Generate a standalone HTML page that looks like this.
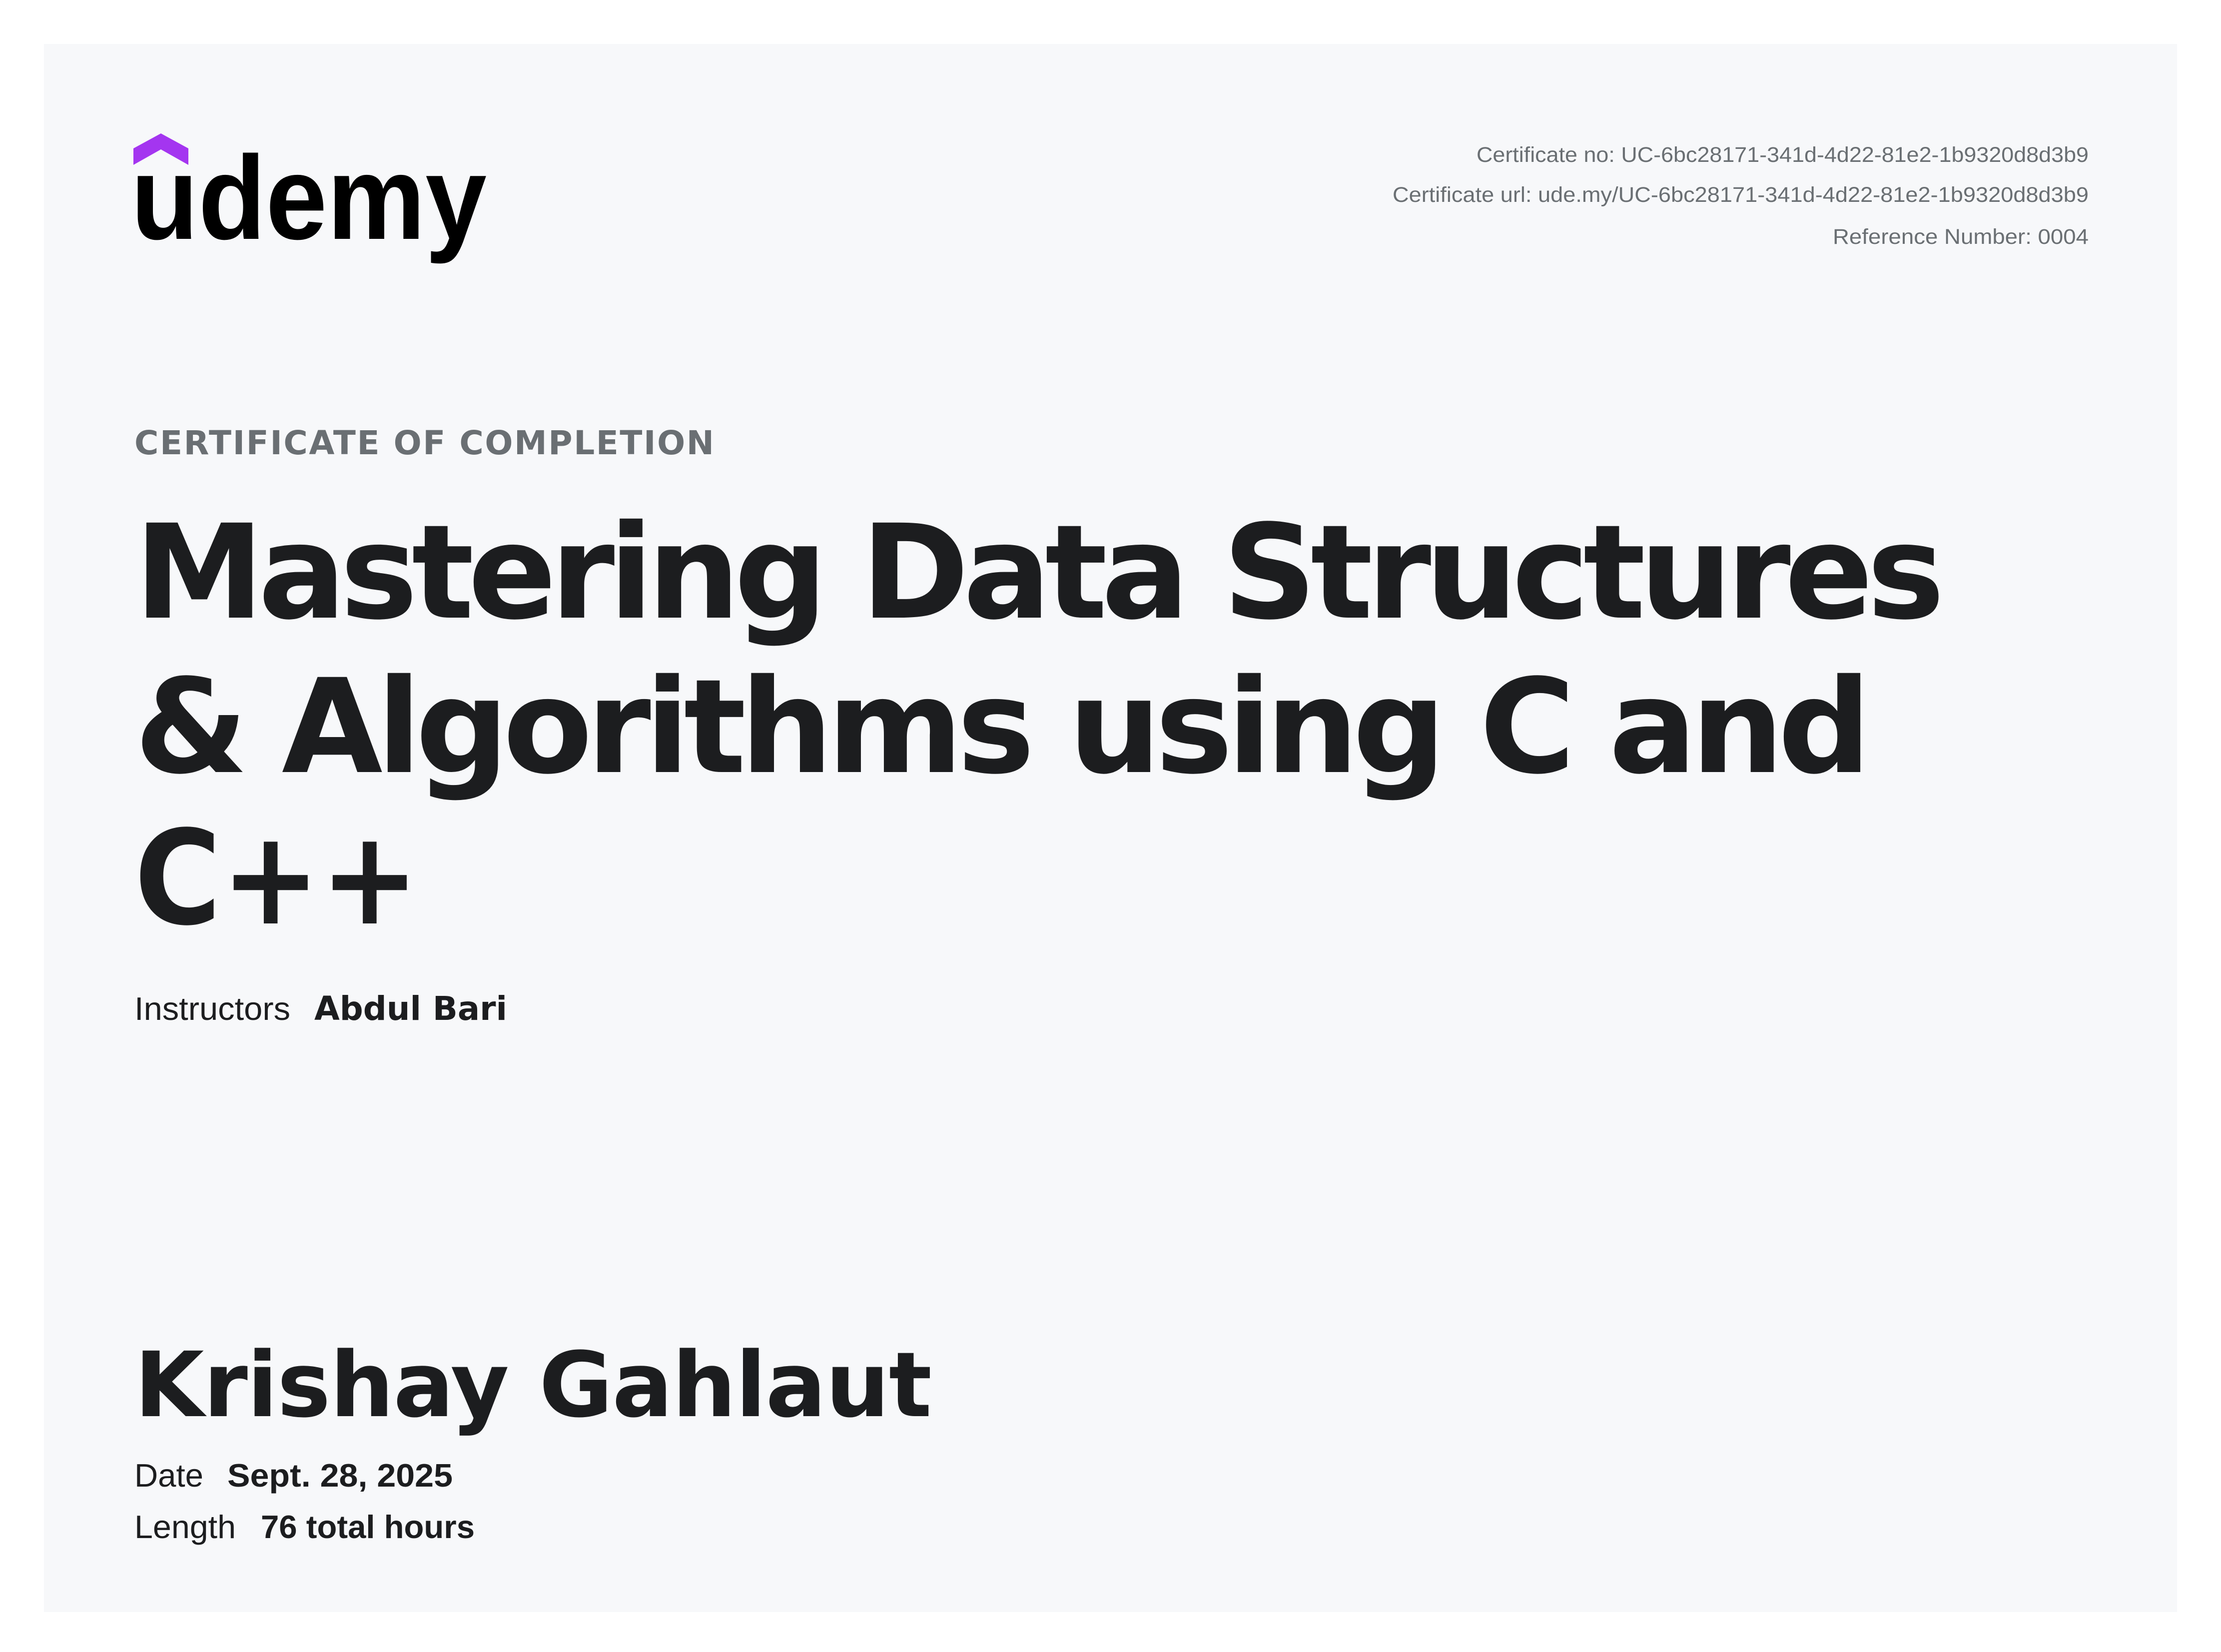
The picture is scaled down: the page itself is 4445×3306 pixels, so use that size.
<!DOCTYPE html>
<html><head><meta charset="utf-8"><style>
html,body{margin:0;padding:0;background:#fff}
svg{display:block}
</style></head><body>
<svg width="4445" height="3306" viewBox="0 0 4445 3306" xmlns="http://www.w3.org/2000/svg">
<rect width="4445" height="3306" fill="#ffffff"/>
<rect x="88" y="88" width="4269" height="3138" fill="#f7f8fa"/>
<polygon points="267,330 267,297 322,267 377,297 377,330 322,299" fill="#a435f0"/>
<text x="262" y="478" font-family="Liberation Sans, sans-serif" font-weight="bold" font-size="238" fill="#000" textLength="712" lengthAdjust="spacingAndGlyphs">udemy</text>
<g font-family="Liberation Sans, sans-serif" font-size="43" fill="#6a6f73" text-anchor="end">
<text x="4180" y="324" textLength="1225" lengthAdjust="spacingAndGlyphs">Certificate no: UC-6bc28171-341d-4d22-81e2-1b9320d8d3b9</text>
<text x="4180" y="404" textLength="1393" lengthAdjust="spacingAndGlyphs">Certificate url: ude.my/UC-6bc28171-341d-4d22-81e2-1b9320d8d3b9</text>
<text x="4180" y="488" textLength="512" lengthAdjust="spacingAndGlyphs">Reference Number: 0004</text>
</g>
<text x="269" y="909" font-family="DejaVu Sans, sans-serif" font-weight="bold" font-size="66" fill="#6a6f73" textLength="1160" lengthAdjust="spacing">CERTIFICATE OF COMPLETION</text>
<g font-family="DejaVu Sans, sans-serif" font-weight="bold" font-size="261" fill="#1c1d1f">
<text x="269" y="1236" textLength="3623" lengthAdjust="spacing">Mastering Data Structures</text>
<text x="269" y="1545" textLength="3476" lengthAdjust="spacing">&amp; Algorithms using C and</text>
<text x="269" y="1848" textLength="570" lengthAdjust="spacingAndGlyphs">C++</text>
</g>
<text x="269" y="2041" font-family="Liberation Sans, sans-serif" font-size="65" fill="#1c1d1f" textLength="312" lengthAdjust="spacingAndGlyphs">Instructors</text>
<text x="629" y="2041" font-family="DejaVu Sans, sans-serif" font-weight="bold" font-size="66" fill="#1c1d1f" textLength="386" lengthAdjust="spacingAndGlyphs">Abdul Bari</text>
<text x="269" y="2834" font-family="DejaVu Sans, sans-serif" font-weight="bold" font-size="180" fill="#1c1d1f" textLength="1596" lengthAdjust="spacing">Krishay Gahlaut</text>
<g font-family="Liberation Sans, sans-serif" font-size="65" fill="#1c1d1f">
<text x="269" y="2975" textLength="138" lengthAdjust="spacingAndGlyphs">Date</text>
<text x="455" y="2975" font-weight="bold" textLength="451" lengthAdjust="spacingAndGlyphs">Sept. 28, 2025</text>
<text x="269" y="3078" textLength="203" lengthAdjust="spacingAndGlyphs">Length</text>
<text x="522" y="3078" font-weight="bold" textLength="428" lengthAdjust="spacingAndGlyphs">76 total hours</text>
</g>
</svg>
</body></html>
